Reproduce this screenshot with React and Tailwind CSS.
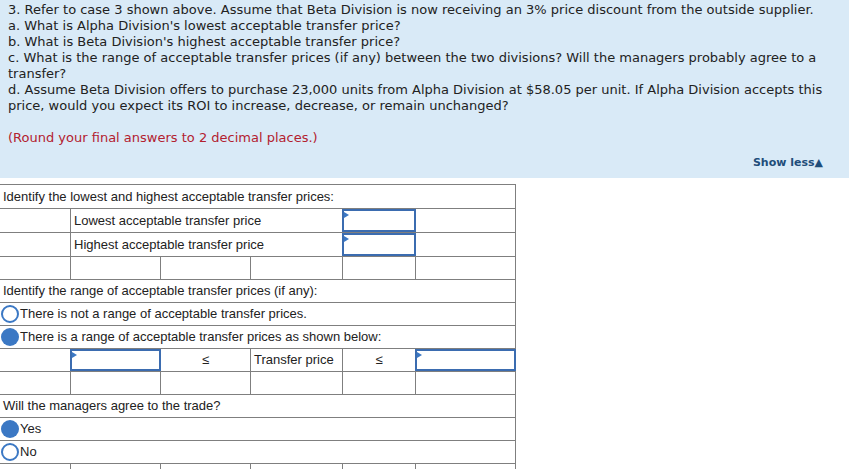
import React from "react";

const LINE = "border-[#7f7f7f]";

function Row({ tall, children }) {
  return (
    <div className={`flex border-b ${LINE} ${tall ? "h-[24px]" : "h-[23px]"}`}>
      {children}
    </div>
  );
}

function Input() {
  return (
    <div className="absolute left-[-1px] right-[-1px] top-0 bottom-0 border-2 border-[#3b6cb0] bg-white">
      <span className="absolute left-0 top-[1px] border-y-[3px] border-y-transparent border-l-[5px] border-l-[#3b78c4]" />
    </div>
  );
}

function Radio({ checked, label }) {
  return (
    <Row>
      <div className="flex items-center gap-[1px] pl-[1px]">
        {checked ? (
          <span className="w-[18px] h-[18px] rounded-full bg-[#3b78c4]" />
        ) : (
          <span className="w-[18px] h-[18px] rounded-full border-2 border-[#3b78c4] bg-white" />
        )}
        <span>{label}</span>
      </div>
    </Row>
  );
}

function BlankRow() {
  return (
    <Row>
      <div className="w-[70px]" />
      <div className={`w-[90px] border-l ${LINE}`} />
      <div className={`w-[90px] border-l ${LINE}`} />
      <div className={`w-[92px] border-l ${LINE}`} />
      <div className={`w-[73px] border-l ${LINE}`} />
      <div className={`flex-1 border-l ${LINE}`} />
    </Row>
  );
}

function LabelRow({ label }) {
  return (
    <Row tall>
      <div className="w-[70px]" />
      <div className={`w-[272px] border-l ${LINE} flex items-center pl-[3px]`}>{label}</div>
      <div className={`w-[73px] border-l ${LINE} relative`}>
        <Input />
      </div>
      <div className={`flex-1 border-l ${LINE}`} />
    </Row>
  );
}

export default function App() {
  return (
    <div className="w-[857px] h-[469px] overflow-hidden bg-white">
      <div className="w-[849px] h-[178px] bg-[#d9eaf7] pl-[8px] pt-[2px] font-['DejaVu_Sans',Verdana,sans-serif] text-[13px] leading-[16px] text-[#222]">
        <p>3. Refer to case 3 shown above. Assume that Beta Division is now receiving an 3% price discount from the outside supplier.</p>
        <p>a. What is Alpha Division's lowest acceptable transfer price?</p>
        <p>b. What is Beta Division's highest acceptable transfer price?</p>
        <p>c. What is the range of acceptable transfer prices (if any) between the two divisions? Will the managers probably agree to a transfer?</p>
        <p>d. Assume Beta Division offers to purchase 23,000 units from Alpha Division at $58.05 per unit. If Alpha Division accepts this price, would you expect its ROI to increase, decrease, or remain unchanged?</p>
        <p className="mt-[16px] text-[#b3212f]">(Round your final answers to 2 decimal places.)</p>
        <div className="flex justify-end pr-[26px] mt-[9px] text-[11px] font-bold text-[#1f4d7a]">
          <span>Show less▲</span>
        </div>
      </div>

      <div className={`mt-[6px] w-[516px] border-t border-r ${LINE} font-['Liberation_Sans',Arial,sans-serif] text-[13px] text-[#222] leading-[16px]`}>
        <Row tall>
          <div className="flex items-center pl-[3px]">Identify the lowest and highest acceptable transfer prices:</div>
        </Row>
        <LabelRow label="Lowest acceptable transfer price" />
        <LabelRow label="Highest acceptable transfer price" />
        <BlankRow />
        <Row>
          <div className="flex items-center pl-[3px]">Identify the range of acceptable transfer prices (if any):</div>
        </Row>
        <Radio label="There is not a range of acceptable transfer prices." />
        <Radio checked label="There is a range of acceptable transfer prices as shown below:" />
        <Row>
          <div className="w-[70px]" />
          <div className={`w-[90px] border-l ${LINE} relative`}>
            <Input />
          </div>
          <div className={`w-[90px] border-l ${LINE} flex items-center justify-center`}>≤</div>
          <div className={`w-[92px] border-l ${LINE} flex items-center pl-[3px]`}>Transfer price</div>
          <div className={`w-[73px] border-l ${LINE} flex items-center justify-center`}>≤</div>
          <div className={`flex-1 border-l ${LINE} relative`}>
            <Input />
          </div>
        </Row>
        <BlankRow />
        <Row>
          <div className="flex items-center pl-[3px]">Will the managers agree to the trade?</div>
        </Row>
        <Radio checked label="Yes" />
        <Radio label="No" />
        <BlankRow />
      </div>
    </div>
  );
}
